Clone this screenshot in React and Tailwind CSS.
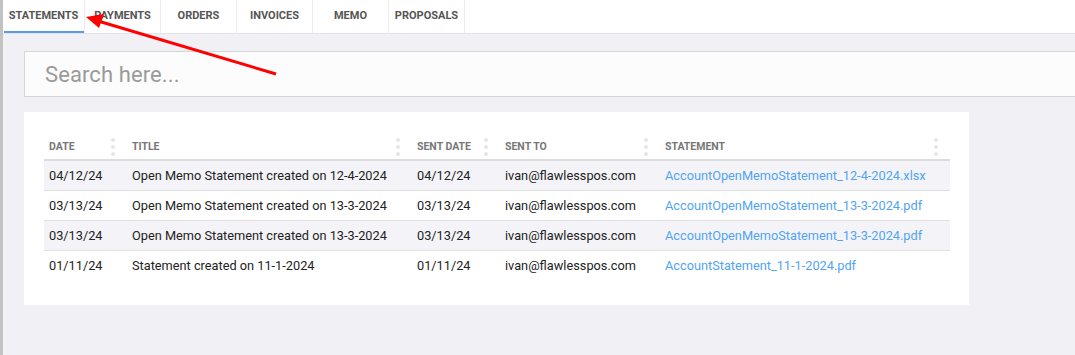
import React from "react";

const tabs = ["STATEMENTS", "PAYMENTS", "ORDERS", "INVOICES", "MEMO", "PROPOSALS"];

const columns = [
  { label: "DATE", width: "w-[83px]" },
  { label: "TITLE", width: "w-[285px]" },
  { label: "SENT DATE", width: "w-[88px]" },
  { label: "SENT TO", width: "w-[160px]" },
  { label: "STATEMENT", width: "w-[290px]" },
];

const rows = [
  {
    date: "04/12/24",
    title: "Open Memo Statement created on 12-4-2024",
    sent: "04/12/24",
    to: "ivan@flawlesspos.com",
    file: "AccountOpenMemoStatement_12-4-2024.xlsx",
  },
  {
    date: "03/13/24",
    title: "Open Memo Statement created on 13-3-2024",
    sent: "03/13/24",
    to: "ivan@flawlesspos.com",
    file: "AccountOpenMemoStatement_13-3-2024.pdf",
  },
  {
    date: "03/13/24",
    title: "Open Memo Statement created on 13-3-2024",
    sent: "03/13/24",
    to: "ivan@flawlesspos.com",
    file: "AccountOpenMemoStatement_13-3-2024.pdf",
  },
  {
    date: "01/11/24",
    title: "Statement created on 11-1-2024",
    sent: "01/11/24",
    to: "ivan@flawlesspos.com",
    file: "AccountStatement_11-1-2024.pdf",
  },
];

const Dots = () => (
  <span className="absolute right-[12px] top-1/2 -translate-y-1/2 flex flex-col gap-[3px]">
    <span className="w-[4px] h-[4px] rounded-full bg-[#e6e6e6]" />
    <span className="w-[4px] h-[4px] rounded-full bg-[#e6e6e6]" />
    <span className="w-[4px] h-[4px] rounded-full bg-[#e6e6e6]" />
  </span>
);

const App = () => {
  return (
    <div className="relative w-[1075px] h-[355px] overflow-hidden flex bg-[#f0f0f5] font-['Roboto',_'Liberation_Sans',_sans-serif]">
      {/* left strip */}
      <div className="w-[3px] shrink-0 bg-[#c2c2c2]" />

      <div className="flex-1 flex flex-col min-w-0">
        {/* Tabs */}
        <div className="h-[34px] shrink-0 bg-white border-b border-[#e4e4e8] flex">
          {tabs.map((t, i) => (
            <div
              key={t}
              className={`relative h-full flex items-center justify-center border-r border-[#ececec] text-[11px] font-bold text-[#555] ${
                i === 0 ? "w-[82px]" : "w-[76px]"
              }`}
            >
              <span>{t}</span>
              {i === 0 && (
                <span className="absolute left-[1px] right-0 bottom-[0px] h-[2px] bg-[#5a9be6]" />
              )}
            </div>
          ))}
        </div>

        {/* Content */}
        <div className="pl-[21px] pt-[17px] flex flex-col">
          <div className="w-[1100px] h-[46px] bg-[#fcfcfc] border border-[#d6d6d6] flex items-center pl-[20px]">
            <span className="text-[22px] text-[#9a9a9a] tracking-[0.1px]">Search here...</span>
          </div>

          <div className="mt-[15px] w-[945px] h-[193px] bg-white pt-[22px] pl-[20px] pr-[19px]">
            {/* header */}
            <div className="flex h-[27px] border-b-[2px] border-[#dcdcdc]">
              {columns.map((c) => (
                <div
                  key={c.label}
                  className={`relative ${c.width} pl-[5px] flex items-center text-[10.5px] font-bold text-[#777]`}
                >
                  {c.label}
                  <Dots />
                </div>
              ))}
            </div>
            {rows.map((r, i) => (
              <div
                key={i}
                className={`flex h-[30px] items-center text-[12.75px] text-[#222] ${
                  i < rows.length - 1 ? "border-b border-[#e0e0e0]" : ""
                } ${i % 2 === 0 ? "bg-[#f4f4f8]" : "bg-white"}`}
              >
                <div className="w-[83px] pl-[5px]">{r.date}</div>
                <div className="w-[285px] pl-[5px]">{r.title}</div>
                <div className="w-[88px] pl-[5px]">{r.sent}</div>
                <div className="w-[160px] pl-[5px]">{r.to}</div>
                <div className="w-[290px] pl-[5px] text-[#52a3f3]">{r.file}</div>
              </div>
            ))}
          </div>
        </div>
      </div>

      {/* red annotation arrow */}
      <svg
        className="absolute left-0 top-0 pointer-events-none"
        width="1075"
        height="355"
        viewBox="0 0 1075 355"
      >
        <line x1="276" y1="74" x2="98" y2="21" stroke="#ff0000" strokeWidth="3" />
        <polygon points="86,17 104,14 99,28" fill="#ff0000" />
      </svg>
    </div>
  );
};

export default App;
